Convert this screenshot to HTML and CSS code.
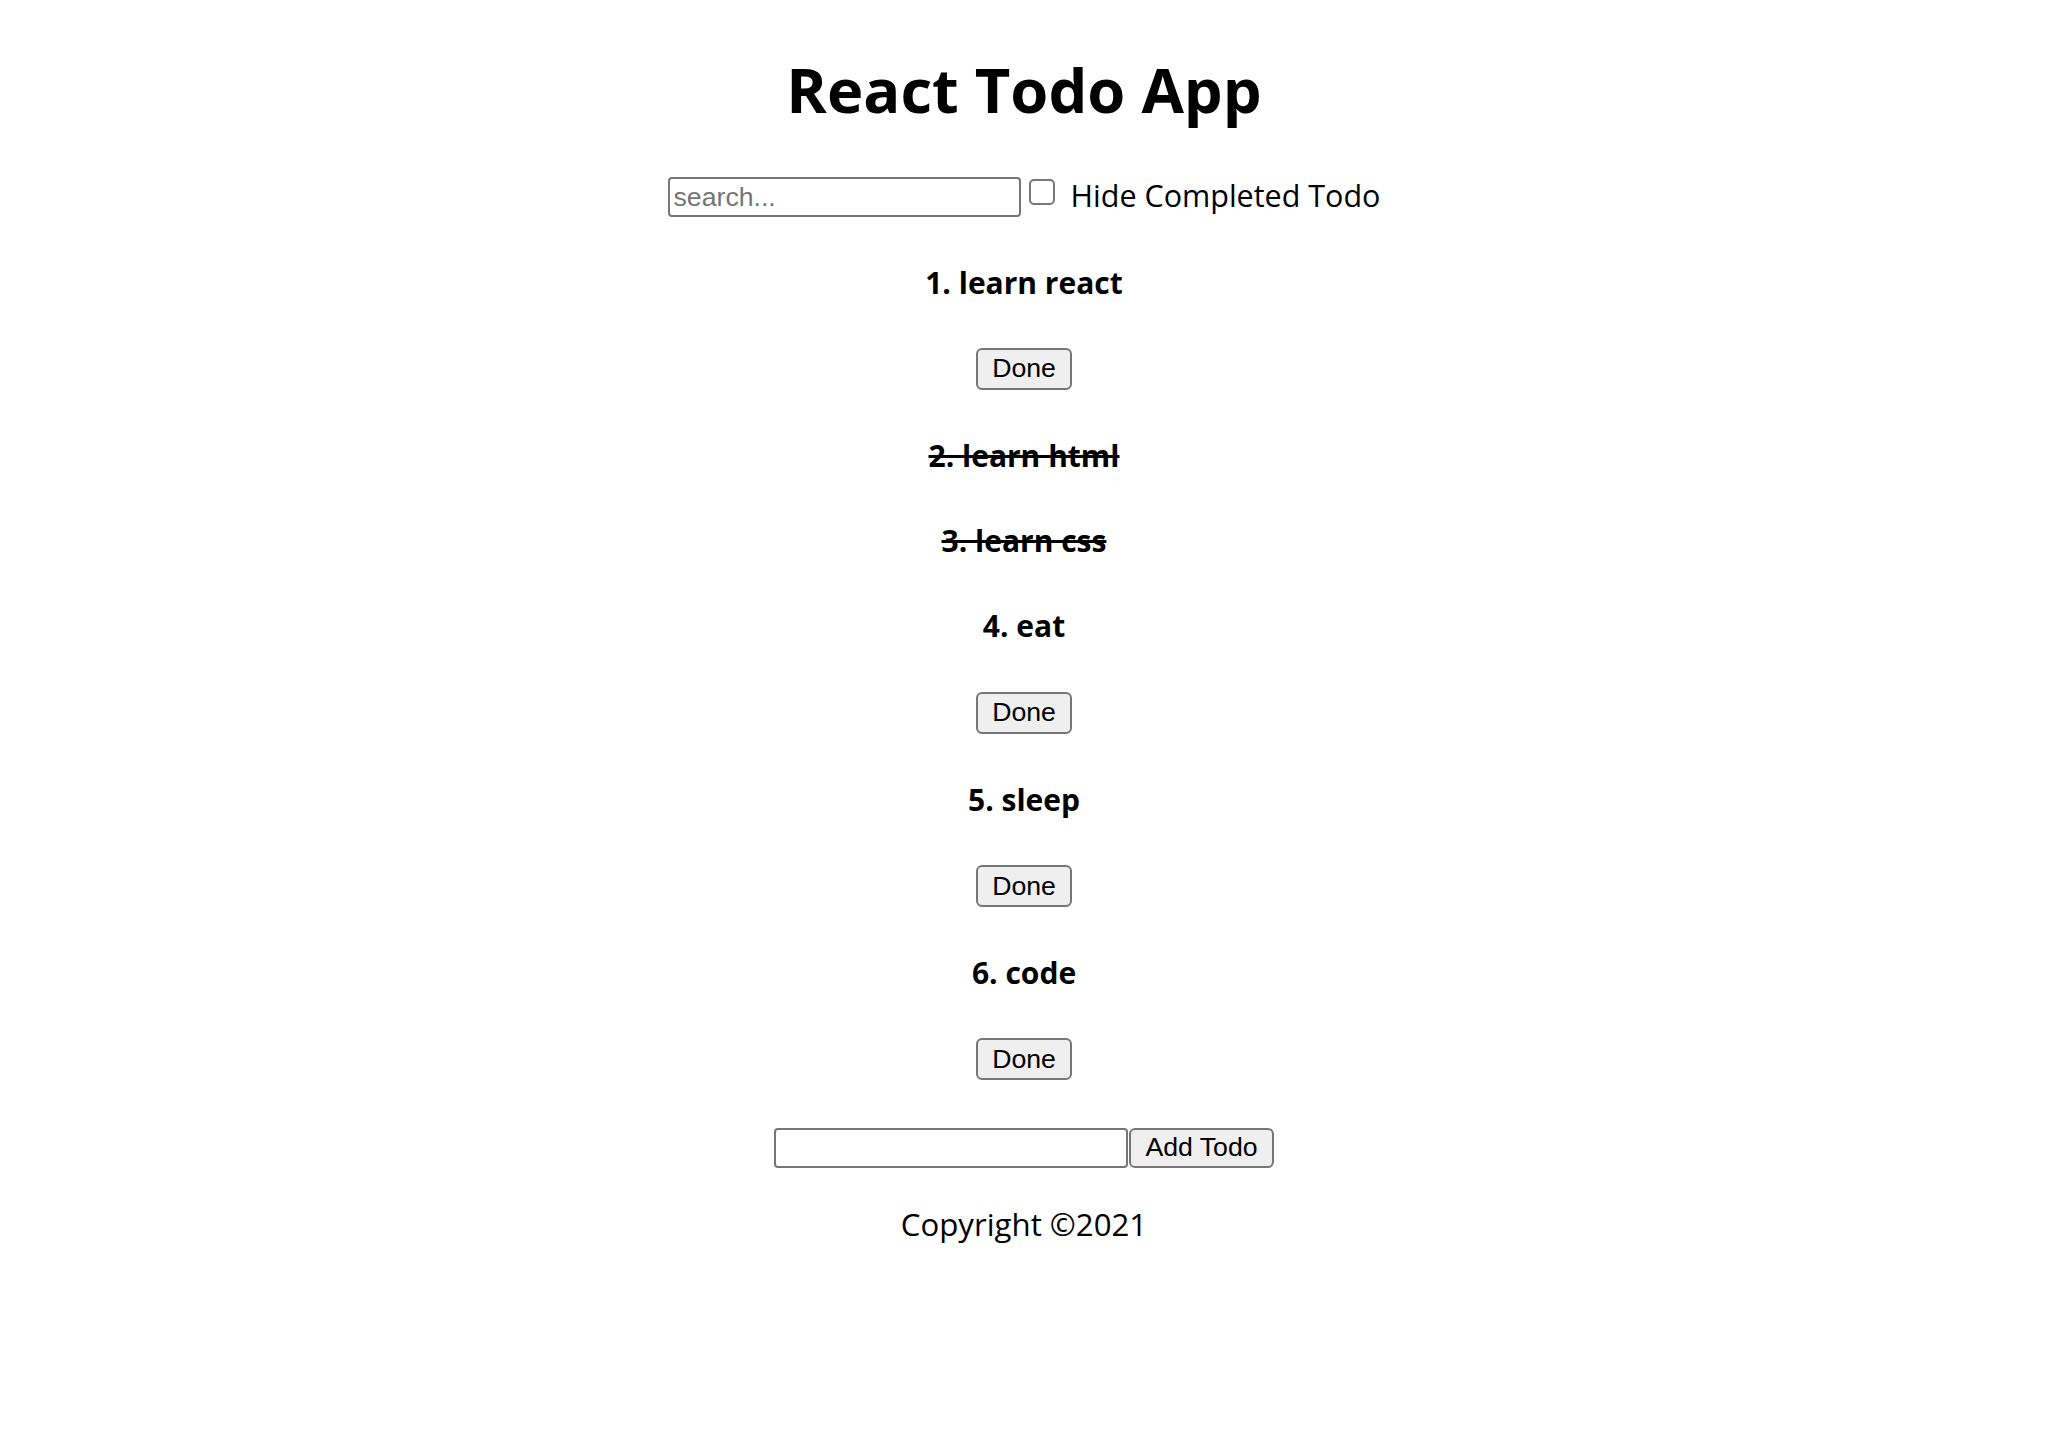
FILE: index.html
```html
<!DOCTYPE html>
<html lang="en">
<head>
<meta charset="utf-8">
<title>React Todo App</title>
<link rel="stylesheet" href="styles.css">
</head>
<body>
<div class="app">
  <h1 class="title">React Todo App</h1>
  <div class="search-row">
    <input class="text-input search-input" type="text" placeholder="search...">
    <input class="check" type="checkbox" id="hide">
    <label class="check-label" for="hide">Hide Completed Todo</label>
  </div>
  <div class="todo">
    <h4 class="todo-title">1. learn react</h4>
    <div class="actions"><button class="btn">Done</button></div>
  </div>
  <div class="todo">
    <h4 class="todo-title done">2. learn html</h4>
  </div>
  <div class="todo">
    <h4 class="todo-title done">3. learn css</h4>
  </div>
  <div class="todo">
    <h4 class="todo-title">4. eat</h4>
    <div class="actions"><button class="btn">Done</button></div>
  </div>
  <div class="todo">
    <h4 class="todo-title">5. sleep</h4>
    <div class="actions"><button class="btn">Done</button></div>
  </div>
  <div class="todo">
    <h4 class="todo-title">6. code</h4>
    <div class="actions"><button class="btn">Done</button></div>
  </div>
  <div class="add-row">
    <input class="text-input add-input" type="text">
    <button class="btn add-btn">Add Todo</button>
  </div>
  <p class="footer">Copyright ©2021</p>
</div>
</body>
</html>
```
FILE: styles.css
```css
html, body {
  margin: 0;
  padding: 0;
  background: #ffffff;
}

.app {
  font-family: "Open Sans", "Noto Sans", sans-serif;
  font-size: 32px;
  color: #000;
  text-align: center;
  padding-top: 47px;
}

.title {
  font-size: 61.5px;
  font-weight: 700;
  line-height: 85px;
  margin: 0 0 39px;
}

.search-row {
  display: flex;
  justify-content: center;
  align-items: flex-start;
  box-sizing: border-box;
  height: 48px;
}

.text-input {
  box-sizing: border-box;
  height: 40px;
  border: 2px solid #767676;
  border-radius: 4px;
  padding: 2px 4px;
  font-family: "Liberation Sans", Arial, sans-serif;
  font-size: 26.67px;
  color: #000;
  background: #fff;
  margin: 0;
  outline: none;
}

.text-input::placeholder {
  color: #757575;
}

.search-input {
  width: 353px;
  margin-top: 6px;
}

.check {
  appearance: none;
  -webkit-appearance: none;
  box-sizing: border-box;
  width: 26px;
  height: 26px;
  border: 2px solid #767676;
  border-radius: 5px;
  background: #fff;
  margin: 8px 6px 0 8px;
}

.check-label {
  font-size: 30.5px;
  line-height: 42px;
  margin-top: 3px;
  margin-left: 10px;
}

.todo-title {
  font-size: 30px;
  font-weight: 700;
  line-height: 42.6px;
  margin: 42.6px 0;
}

.todo-title.done {
  text-decoration: line-through;
  text-decoration-thickness: 3px;
}

.actions {
  display: flex;
  justify-content: center;
  align-items: flex-start;
  box-sizing: border-box;
  height: 45.6px;
  padding-top: 1.2px;
}

.btn {
  box-sizing: border-box;
  height: 42px;
  padding: 0 14px;
  border: 2px solid #767676;
  border-radius: 6px;
  background: #efefef;
  font-family: "Liberation Sans", Arial, sans-serif;
  font-size: 26.67px;
  color: #000;
  margin: 0;
}

.add-row {
  display: flex;
  justify-content: center;
  align-items: flex-start;
  box-sizing: border-box;
  height: 44px;
  margin-top: 44px;
  padding-top: 1px;
}

.add-input {
  width: 354px;
}

.add-btn {
  height: 40px;
  width: 145px;
  padding: 0;
  margin-left: 1px;
}

.footer {
  font-size: 31.2px;
  margin: 32px 0 0;
  line-height: 42px;
}
```
